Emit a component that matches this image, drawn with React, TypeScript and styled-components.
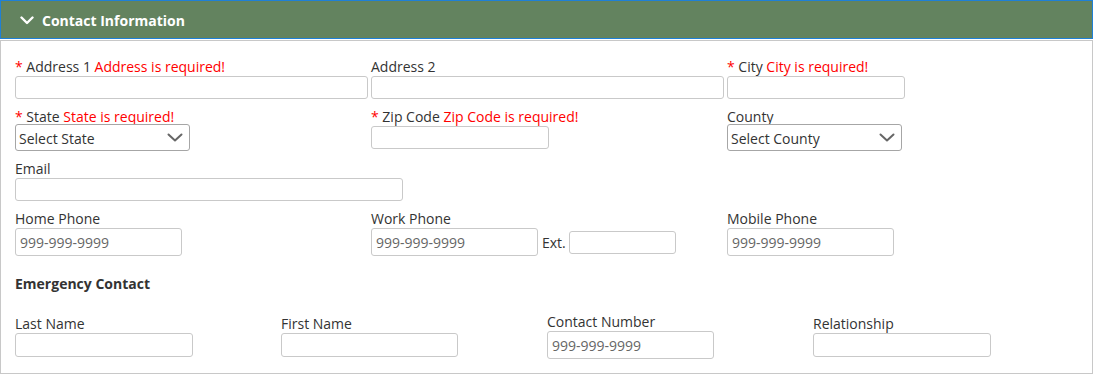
import React from "react"
import styled, { createGlobalStyle } from "styled-components"

const GlobalStyle = createGlobalStyle`
  html, body {
    margin: 0;
    padding: 0;
    background: #fff;
  }
  body {
    font-family: "Open Sans", "Liberation Sans", Arial, sans-serif;
    font-size: 14px;
    color: #333;
  }
  * { box-sizing: border-box; }
`

const Panel = styled.section`
  width: 100%;
`

const Header = styled.div`
  height: 39px;
  background: #63835f;
  border: 1px solid #1f80d6;
  display: flex;
  align-items: center;
  padding: 1px 0 0 19px;
  gap: 8px;
  color: #fff;
  font-weight: 700;
  font-size: 14px;
  line-height: 19px;
`

const Body = styled.div`
  margin-top: 1px;
  border: 1px solid #c8c8c8;
  padding: 16px 14px 14px 14px;
`

const Row = styled.div<{ $cols: number; $colWidth: number; $center?: boolean }>`
  display: grid;
  grid-template-columns: repeat(${p => p.$cols}, ${p => p.$colWidth}px);
  align-items: ${p => (p.$center ? "center" : "start")};
  margin-bottom: 8px;
`

const Field = styled.div`
  display: flex;
  flex-direction: column;
  align-items: flex-start;
`

const Label = styled.label`
  line-height: 19px;
  font-size: 14px;
  color: #333;
  white-space: nowrap;
`

const Req = styled.span`
  color: #f00;
`

const Err = styled.span`
  color: #f00;
`

const TextInput = styled.input<{ $w: number; $h?: number }>`
  width: ${p => p.$w}px;
  height: ${p => p.$h ?? 23}px;
  border: 1px solid #c9c9c9;
  border-radius: 3px;
  padding: 0 4px;
  font-family: inherit;
  font-size: 14px;
  color: #333;
  background: #fff;
  outline: none;
  &::placeholder {
    color: #666;
  }
`

const SelectWrap = styled.div<{ $w: number }>`
  position: relative;
  width: ${p => p.$w}px;
  height: 27px;
  margin-top: -2px;
`

const Select = styled.select`
  appearance: none;
  -webkit-appearance: none;
  width: 100%;
  height: 100%;
  border: 1px solid #a6a6a6;
  border-radius: 3px;
  background: #fff;
  padding: 1px 24px 0 3px;
  font-family: inherit;
  font-size: 14px;
  color: #333;
  outline: none;
`

const Caret = styled.svg`
  position: absolute;
  right: 7px;
  top: 9px;
  pointer-events: none;
`

const PhoneGroup = styled.div`
  display: flex;
  align-items: center;
`

const ExtLabel = styled.span`
  margin: 0 3px 0 4px;
  font-size: 14px;
  color: #333;
`

const SectionTitle = styled.div`
  font-weight: 700;
  font-size: 14px;
  line-height: 19px;
  color: #333;
  margin: 18px 0 19px;
`

const LastRow = styled(Row)`
  margin-bottom: 0;
`

const Chevron = () => (
  <svg width="14" height="9" viewBox="0 0 14 9">
    <polyline points="1.5,1.5 7,7 12.5,1.5" fill="none" stroke="#fff" strokeWidth="2.4" strokeLinecap="round" strokeLinejoin="round" />
  </svg>
)

const Dropdown = ({ w, text }: { w: number; text: string }) => (
  <SelectWrap $w={w}>
    <Select defaultValue="">
      <option value="">{text}</option>
    </Select>
    <Caret width="16" height="9" viewBox="0 0 16 9">
      <polyline points="1.5,1.5 8,7.5 14.5,1.5" fill="none" stroke="#666" strokeWidth="2" strokeLinecap="round" strokeLinejoin="round" />
    </Caret>
  </SelectWrap>
)

const PHONE = "999-999-9999"

const App = () => {
  return (
    <>
      <GlobalStyle />
      <Panel>
        <Header>
          <Chevron />
          <span>Contact Information</span>
        </Header>
        <Body>
          <Row $cols={3} $colWidth={356}>
            <Field>
              <Label><Req>*</Req> Address 1 <Err>Address is required!</Err></Label>
              <TextInput $w={353} />
            </Field>
            <Field>
              <Label>Address 2</Label>
              <TextInput $w={353} />
            </Field>
            <Field>
              <Label><Req>*</Req> City <Err>City is required!</Err></Label>
              <TextInput $w={178} />
            </Field>
          </Row>

          <Row $cols={3} $colWidth={356}>
            <Field>
              <Label><Req>*</Req> State <Err>State is required!</Err></Label>
              <Dropdown w={175} text="Select State" />
            </Field>
            <Field>
              <Label><Req>*</Req> Zip Code <Err>Zip Code is required!</Err></Label>
              <TextInput $w={178} />
            </Field>
            <Field>
              <Label>County</Label>
              <Dropdown w={175} text="Select County" />
            </Field>
          </Row>

          <Row $cols={1} $colWidth={400}>
            <Field>
              <Label>Email</Label>
              <TextInput $w={388} />
            </Field>
          </Row>

          <Row $cols={3} $colWidth={356}>
            <Field>
              <Label>Home Phone</Label>
              <TextInput $w={167} $h={28} placeholder={PHONE} />
            </Field>
            <Field>
              <Label>Work Phone</Label>
              <PhoneGroup>
                <TextInput $w={167} $h={28} placeholder={PHONE} />
                <ExtLabel>Ext.</ExtLabel>
                <TextInput $w={107} $h={23} />
              </PhoneGroup>
            </Field>
            <Field>
              <Label>Mobile Phone</Label>
              <TextInput $w={167} $h={28} placeholder={PHONE} />
            </Field>
          </Row>

          <SectionTitle>Emergency Contact</SectionTitle>

          <LastRow $cols={4} $colWidth={266} $center>
            <Field>
              <Label>Last Name</Label>
              <TextInput $w={178} $h={24} />
            </Field>
            <Field>
              <Label>First Name</Label>
              <TextInput $w={177} $h={24} />
            </Field>
            <Field>
              <Label>Contact Number</Label>
              <TextInput $w={167} $h={28} placeholder={PHONE} />
            </Field>
            <Field>
              <Label>Relationship</Label>
              <TextInput $w={178} $h={24} />
            </Field>
          </LastRow>
        </Body>
      </Panel>
    </>
  )
}

export default App
